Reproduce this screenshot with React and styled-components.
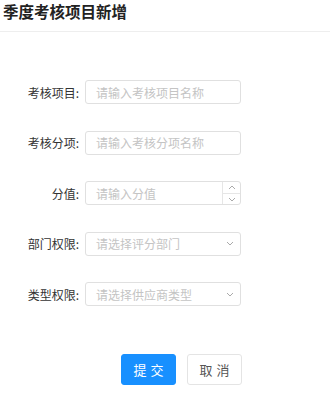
import React from 'react'
import styled, { createGlobalStyle } from 'styled-components'

const GlobalStyle = createGlobalStyle`
  body {
    margin: 0;
    background: #fff;
    font-family: "Noto Sans CJK SC", "Liberation Sans", sans-serif;
  }
`

const Header = styled.div`
  height: 32px;
  padding: 0 3px;
  border-bottom: 1px solid #eeeeee;
  box-sizing: border-box;
`

const Title = styled.h1`
  margin: 0;
  font-size: 15.5px;
  line-height: 22px;
  font-weight: 700;
  color: #222;
`

const Form = styled.div`
  display: flex;
  flex-direction: column;
  gap: 26px;
  padding-top: 48px;
`

const Row = styled.div`
  display: flex;
  align-items: center;
  height: 24.5px;
`

const Label = styled.label`
  width: 79px;
  padding-right: 6px;
  text-align: right;
  font-size: 12px;
  color: #333;
  flex-shrink: 0;
`

const Field = styled.div`
  width: 156px;
  height: 24px;
  box-sizing: border-box;
  border: 1px solid #e0e0e0;
  border-radius: 3px;
  display: flex;
  align-items: center;
  padding-left: 10px;
  font-size: 12px;
  color: #c4c4c4;
  position: relative;
`

const Placeholder = styled.span`
  flex: 1;
`

const Spinner = styled.div`
  width: 17px;
  height: 100%;
  border-left: 1px solid #e6e6e6;
  display: flex;
  flex-direction: column;
`

const SpinBtn = styled.div`
  flex: 1;
  display: flex;
  align-items: center;
  justify-content: center;
  border-top: ${p => (p.$bottom ? '1px solid #e6e6e6' : 'none')};
`

const Arrow = styled.div`
  width: 20px;
  display: flex;
  align-items: center;
  justify-content: center;
`

const Buttons = styled.div`
  display: flex;
  gap: 11px;
  padding-left: 121px;
  margin-top: 47px;
`

const Button = styled.button`
  width: 55px;
  height: 31px;
  border-radius: 3px;
  font-family: inherit;
  font-size: 13px;
  letter-spacing: 4px;
  text-indent: 4px;
  cursor: pointer;
  border: 1px solid ${p => (p.$primary ? '#1890ff' : '#e4e4e4')};
  background: ${p => (p.$primary ? '#1890ff' : '#fff')};
  color: ${p => (p.$primary ? '#fff' : '#555')};
`

const Chevron = ({ up }) => (
  <svg width="8" height="5" viewBox="0 0 8 5">
    <path
      d={up ? 'M1 4 L4 1 L7 4' : 'M1 1 L4 4 L7 1'}
      fill="none"
      stroke="#aaa"
      strokeWidth="1"
    />
  </svg>
)

const rows = [
  { label: '考核项目:', ph: '请输入考核项目名称' },
  { label: '考核分项:', ph: '请输入考核分项名称' },
  { label: '分值:', ph: '请输入分值', kind: 'number' },
  { label: '部门权限:', ph: '请选择评分部门', kind: 'select' },
  { label: '类型权限:', ph: '请选择供应商类型', kind: 'select' },
]

export default function App() {
  return (
    <>
      <GlobalStyle />
      <Header>
        <Title>季度考核项目新增</Title>
      </Header>
      <Form>
        {rows.map(r => (
          <Row key={r.label}>
            <Label>{r.label}</Label>
            <Field>
              <Placeholder>{r.ph}</Placeholder>
              {r.kind === 'number' && (
                <Spinner>
                  <SpinBtn><Chevron up /></SpinBtn>
                  <SpinBtn $bottom><Chevron /></SpinBtn>
                </Spinner>
              )}
              {r.kind === 'select' && (
                <Arrow><Chevron /></Arrow>
              )}
            </Field>
          </Row>
        ))}
      </Form>
      <Buttons>
        <Button $primary>提交</Button>
        <Button>取消</Button>
      </Buttons>
    </>
  )
}
